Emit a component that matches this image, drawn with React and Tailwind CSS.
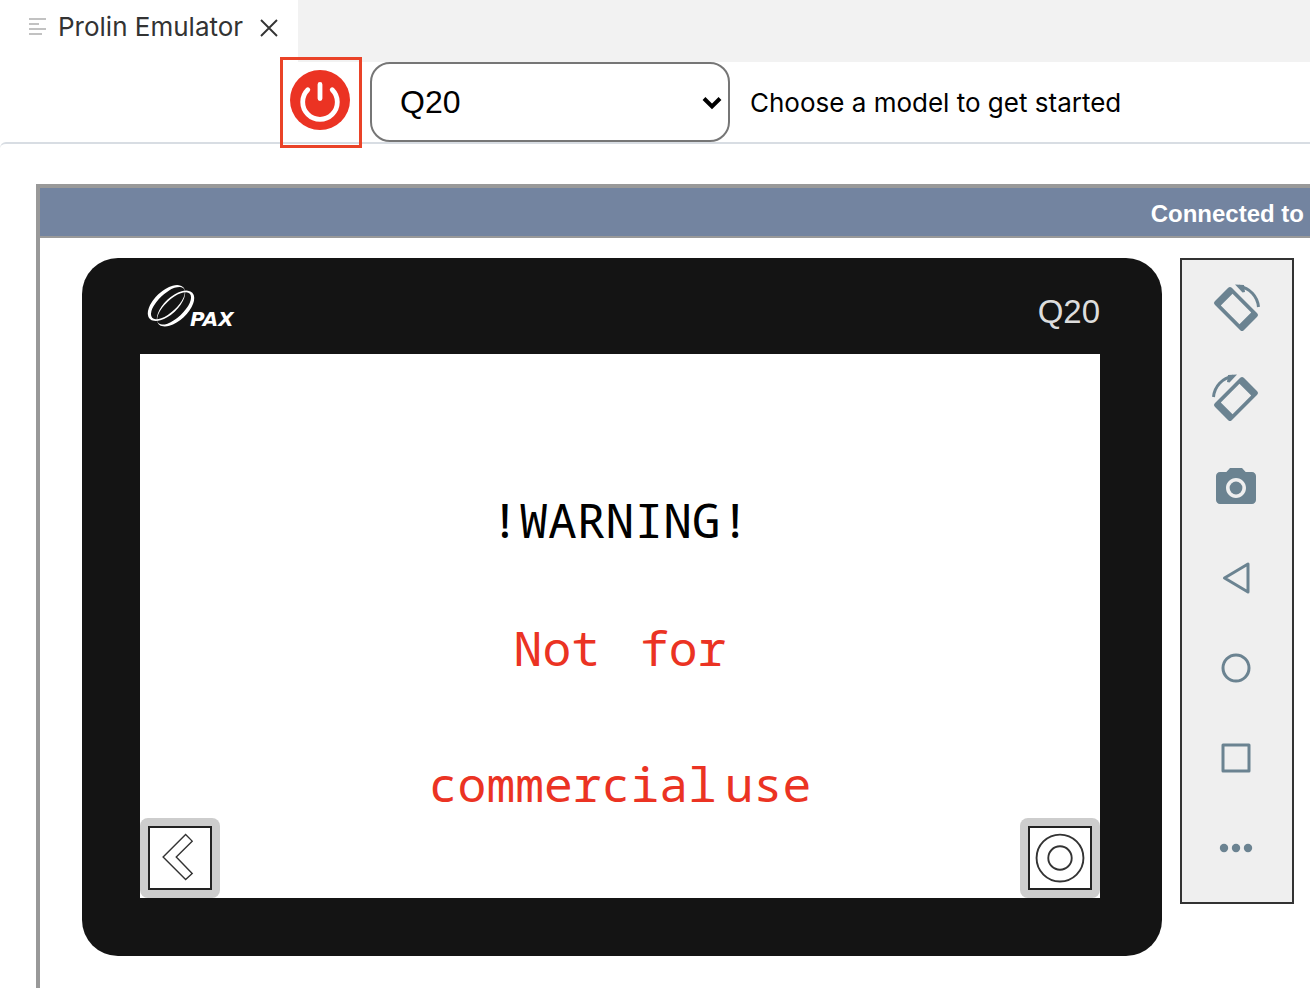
import { MdCameraAlt } from "react-icons/md";

function RotateIcon({ flipped }) {
  return (
    <svg width="52" height="52" viewBox="-26 -27 52 52" fill="currentColor" aria-hidden="true">
      <g transform={flipped ? "scale(-1 1)" : undefined}>
        <path
          transform="rotate(45)"
          fillRule="evenodd"
          d="M-18-12h36a2.500 2.500 0 0 1 2.500 2.500v19a2.500 2.500 0 0 1-2.500 2.500h-36a2.500 2.500 0 0 1-2.500-2.500v-19a2.500 2.500 0 0 1 2.500-2.500zM-13.200-8.300v16.600h26.400v-16.600z"
        />
        <path d="M3-22.800A23 23 0 0 1 22.500-2" fill="none" stroke="currentColor" strokeWidth="3" />
        <path d="M-1-24.500L8-24L9-17L6.500-16.500Z" />
      </g>
    </svg>
  );
}

function Shape({ children }) {
  return (
    <svg width="40" height="40" viewBox="-20 -20 40 40" fill="none" stroke="currentColor" strokeWidth="3" strokeLinejoin="round" aria-hidden="true">
      {children}
    </svg>
  );
}

const tools = [
  { label: "Rotate left", icon: <RotateIcon /> },
  { label: "Rotate right", icon: <RotateIcon flipped /> },
  { label: "Take screenshot", icon: <MdCameraAlt size={48} aria-hidden="true" /> },
  { label: "Back", icon: <Shape><path d="M-11.500 0L12-14V14Z" /></Shape> },
  { label: "Home", icon: <Shape><circle r="13" /></Shape> },
  { label: "Overview", icon: <Shape><rect x="-13" y="-13" width="26" height="26" /></Shape> },
  {
    label: "More",
    icon: (
      <Shape>
        <g fill="currentColor" stroke="none">
          <circle cx="-12" r="4.200" />
          <circle r="4.200" />
          <circle cx="12" r="4.200" />
        </g>
      </Shape>
    ),
  },
];

function TabBar() {
  return (
    <header className="flex h-[62px] bg-[#f2f2f2]">
      <div className="flex w-[298px] items-center bg-white pb-2 pl-7 text-[#333333]">
        <svg width="20" height="20" viewBox="0 0 20 20" stroke="#c2c2c2" strokeWidth="2" aria-hidden="true">
          <path d="M1 2h17M1 7h10M1 12h17M1 17h13" />
        </svg>
        <span className="pl-[10px] font-['Inter',sans-serif] text-[26px] leading-8">Prolin Emulator</span>
        <button type="button" aria-label="Close tab" className="ml-4 pt-[2px]">
          <svg width="20" height="20" viewBox="0 0 20 20" stroke="currentColor" strokeWidth="1.900" aria-hidden="true">
            <path d="M2 2l16 16M18 2L2 18" />
          </svg>
        </button>
      </div>
    </header>
  );
}

function Toolbar() {
  return (
    <div className="flex h-20 items-center gap-5 pl-[290px]">
      <button type="button" aria-label="Power" className="relative h-16 shrink-0">
        <svg width="60" height="60" viewBox="0 0 60 60" className="mb-1 block" aria-hidden="true">
          <circle cx="30" cy="30" r="30" fill="#eb3323" />
          <path d="M17.800 19.800A17.300 17.300 0 1 0 42.200 19.800M30 14.500V28.500" fill="none" stroke="#fff" strokeWidth="4.800" strokeLinecap="round" />
        </svg>
        <span className="absolute -top-[13px] -right-3 -bottom-[14px] -left-[10px] border-3 border-[#ea4328]" />
      </button>
      <div className="relative">
        <select aria-labelledby="model-hint" className="h-20 w-[360px] appearance-none rounded-[20px] border-2 border-[#767676] bg-white px-7 font-['Liberation_Sans',Arial,sans-serif] text-[32px] text-black">
          <option>Q20</option>
        </select>
        <svg width="20" height="14" viewBox="0 0 20 14" className="pointer-events-none absolute top-[34px] right-2" fill="none" stroke="#000" strokeWidth="4" aria-hidden="true">
          <path d="M2 2.500L10 10.500L18 2.500" />
        </svg>
      </div>
      <span id="model-hint" className="pt-[2px] font-['Inter',sans-serif] text-[26px] leading-8 text-black">
        Choose a model to get started
      </span>
    </div>
  );
}

function PaxLogo() {
  return (
    <div className="flex items-end text-white">
      <svg width="52" height="42" viewBox="0 0 52 42" fill="currentColor" aria-hidden="true">
        <path
          fillRule="evenodd"
          transform="translate(20.500 18) rotate(-43)"
          d="M-23 0a23 12 0 0 1 46 0a23 12 0 0 1-46 0zM-20.500 1a21.500 9.300 0 0 0 43 0a21.500 9.300 0 0 0-43 0z"
        />
        <path
          fillRule="evenodd"
          transform="translate(29.500 23.500) rotate(137)"
          d="M-23 0a23 12 0 0 1 46 0a23 12 0 0 1-46 0zM-20.500 1a21.500 9.300 0 0 0 43 0a21.500 9.300 0 0 0-43 0z"
        />
      </svg>
      <span className="-ml-2 font-['DejaVu_Sans',sans-serif] text-[20px] leading-4 font-bold italic">PAX</span>
    </div>
  );
}

function NavButton({ label, children }) {
  return (
    <button type="button" aria-label={label} className="rounded-lg bg-[#cdcdcd] p-2">
      <svg width="64" height="64" viewBox="0 0 64 64" fill="none" stroke="#333" strokeWidth="1.500" className="block border-2 border-[#222] bg-white" aria-hidden="true">
        {children}
      </svg>
    </button>
  );
}

function Device() {
  return (
    <section className="flex-1 rounded-[36px] bg-[#141414] pr-[62px] pb-[58px] pl-[58px]">
      <div className="flex h-24 items-center justify-between pl-[6px]">
        <PaxLogo />
        <span className="pt-3 font-['Liberation_Sans',Arial,sans-serif] text-[33px] leading-10 text-[#dddddd]">Q20</span>
      </div>
      <div className="bg-white">
        <div className="flex flex-col items-center pt-[134px] pb-[2px] font-['Noto_Sans_Mono','DejaVu_Sans_Mono',monospace] text-[48px] leading-[64px] text-[#eb3323]">
          <p className="text-black">!WARNING!</p>
          <p className="mt-16 flex gap-10">
            <span>Not</span> <span>for</span>
          </p>
          <p className="mt-[72px] flex gap-2">
            <span>commercial</span> <span>use</span>
          </p>
        </div>
        <div className="flex justify-between">
          <NavButton label="Back">
            <path d="M38 7L14 31L38 55L45 48.500L28 31L45 14Z" />
          </NavButton>
          <NavButton label="Home">
            <circle cx="32" cy="32" r="25" strokeWidth="2" />
            <circle cx="32" cy="32" r="12.500" strokeWidth="2" />
          </NavButton>
        </div>
      </div>
    </section>
  );
}

export default function App() {
  return (
    <div className="flex min-h-screen flex-col overflow-hidden bg-white">
      <TabBar />
      <Toolbar />
      <main className="flex flex-1 flex-col rounded-tl-md border-t-2 border-[#d8dde3] pt-10 pl-9">
        <div className="flex-1 border-t-4 border-l-4 border-[#999999] pb-8">
          <div className="flex h-[50px] items-center justify-end border-b-2 border-[#999999] bg-[#7384a0] pt-1 pr-[6px]">
            <h1 className="font-['Liberation_Sans',Arial,sans-serif] text-2xl leading-8 font-bold text-white">Connected to</h1>
          </div>
          <div className="flex items-start gap-[18px] pt-5 pr-4 pl-[42px]">
            <Device />
            <nav aria-label="Device controls" className="flex w-[114px] shrink-0 flex-col border-2 border-[#333333] bg-[#efefef] pt-[3px] pr-[2px] pb-[9px]">
              {tools.map((tool) => (
                <button key={tool.label} type="button" aria-label={tool.label} className="flex h-[90px] items-center justify-center text-[#6b8391]">
                  {tool.icon}
                </button>
              ))}
            </nav>
          </div>
        </div>
      </main>
    </div>
  );
}
